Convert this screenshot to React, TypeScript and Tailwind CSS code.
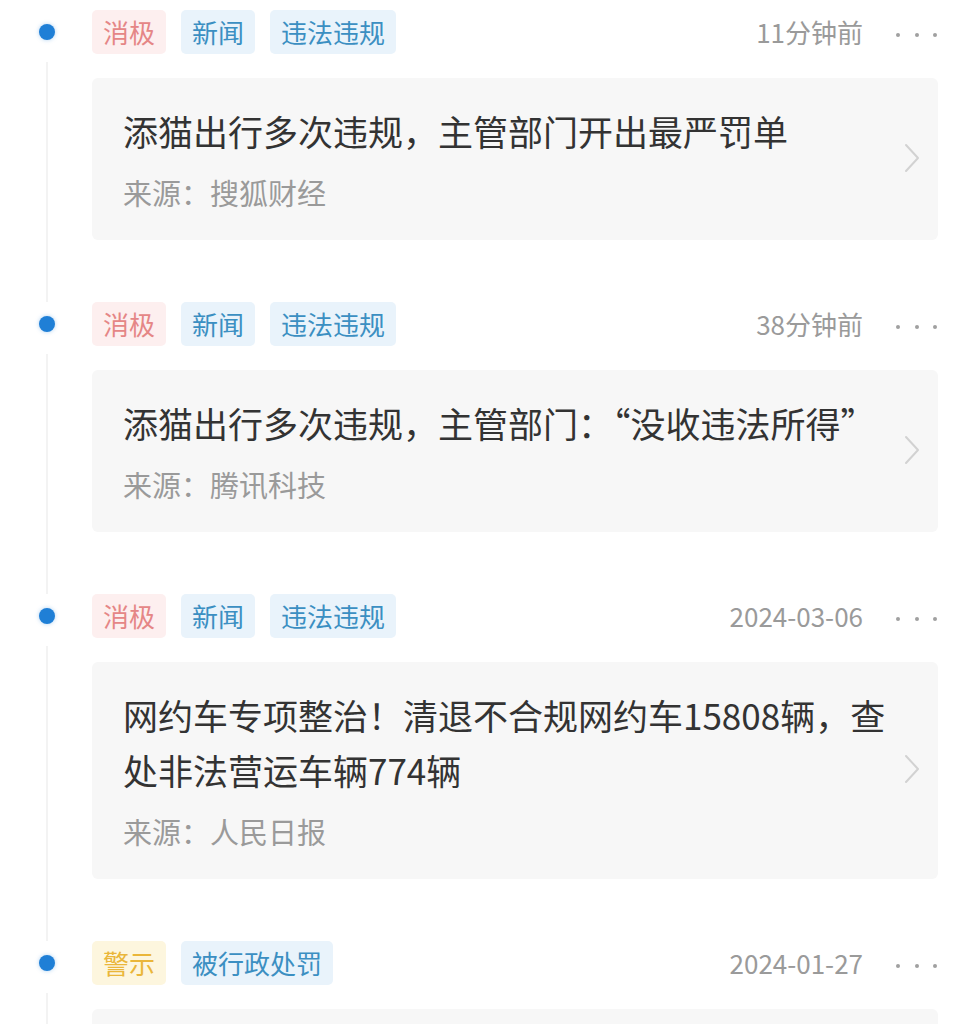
type Tone = "red" | "blue" | "yellow";

interface Item {
  tags: { label: string; tone: Tone }[];
  time: string;
  title: string;
  source: string;
}

const items: Item[] = [
  {
    tags: [
      { label: "消极", tone: "red" },
      { label: "新闻", tone: "blue" },
      { label: "违法违规", tone: "blue" },
    ],
    time: "11分钟前",
    title: "添猫出行多次违规，主管部门开出最严罚单",
    source: "来源：搜狐财经",
  },
  {
    tags: [
      { label: "消极", tone: "red" },
      { label: "新闻", tone: "blue" },
      { label: "违法违规", tone: "blue" },
    ],
    time: "38分钟前",
    title: "添猫出行多次违规，主管部门：“没收违法所得”",
    source: "来源：腾讯科技",
  },
  {
    tags: [
      { label: "消极", tone: "red" },
      { label: "新闻", tone: "blue" },
      { label: "违法违规", tone: "blue" },
    ],
    time: "2024-03-06",
    title: "网约车专项整治！清退不合规网约车15808辆，查处非法营运车辆774辆",
    source: "来源：人民日报",
  },
  {
    tags: [
      { label: "警示", tone: "yellow" },
      { label: "被行政处罚", tone: "blue" },
    ],
    time: "2024-01-27",
    title: "添猫出行被行政处罚",
    source: "来源：企业信用信息公示系统",
  },
];

const toneClass: Record<Tone, string> = {
  red: "bg-[#fdefef] text-[#e58686]",
  blue: "bg-[#e9f3fb] text-[#3b8fc2]",
  yellow: "bg-[#fdf6de] text-[#eab63a]",
};

export default function App() {
  return (
    <div
      className="h-[1024px] w-[967px] overflow-hidden bg-white pt-[10px]"
      style={{ fontFamily: '"Noto Sans CJK SC", "Noto Sans", sans-serif' }}
    >
      {items.map((item, idx) => (
        <div key={idx} className="flex">
          {/* timeline column */}
          <div className="flex w-[92px] shrink-0 flex-col">
            <div className="flex h-[44px] items-center pl-[39px]">
              <span className="h-4 w-4 rounded-full bg-[#1f7fd6] shadow-[0_0_4px_rgba(31,127,214,0.35)]" />
            </div>
            <div className="ml-[46px] mt-[8px] w-[2px] flex-1 bg-[#f3f3f3]" />
          </div>

          <div className="flex-1 pr-[29px] pb-[62px]">
            <div className="flex h-[44px] items-center">
              <div className="flex gap-[15px]">
                {item.tags.map((t) => (
                  <span
                    key={t.label}
                    className={`flex h-[44px] items-center rounded-[5px] px-[11px] text-[26px] leading-none ${toneClass[t.tone]}`}
                  >
                    {t.label}
                  </span>
                ))}
              </div>
              <span className="ml-auto text-[26px] leading-none text-[#9a9a9a]">
                {item.time}
              </span>
              <span className="ml-[33px] mt-[6px] flex w-[42px] justify-between pr-[1px]">
                <span className="h-[4px] w-[4px] rounded-full bg-[#a0a0a0]" />
                <span className="h-[4px] w-[4px] rounded-full bg-[#a0a0a0]" />
                <span className="h-[4px] w-[4px] rounded-full bg-[#a0a0a0]" />
              </span>
            </div>

            <div className="mt-[24px] flex items-center rounded-[6px] bg-[#f7f7f7] pt-[25px] pb-[28px] pl-[31px] pr-[18px]">
              <div className="flex-1">
                <div className="text-[35px] leading-[55px] text-[#333333]">
                  {item.title}
                </div>
                <div className="mt-[14px] text-[29px] leading-[40px] text-[#9a9a9a]">
                  {item.source}
                </div>
              </div>
              <svg
                width="16"
                height="30"
                viewBox="0 0 16 30"
                fill="none"
                className="shrink-0"
              >
                <polyline
                  points="2,2 14,15 2,28"
                  stroke="#d2d2d2"
                  strokeWidth="2"
                  strokeLinecap="round"
                  strokeLinejoin="round"
                />
              </svg>
            </div>
          </div>
        </div>
      ))}
    </div>
  );
}
